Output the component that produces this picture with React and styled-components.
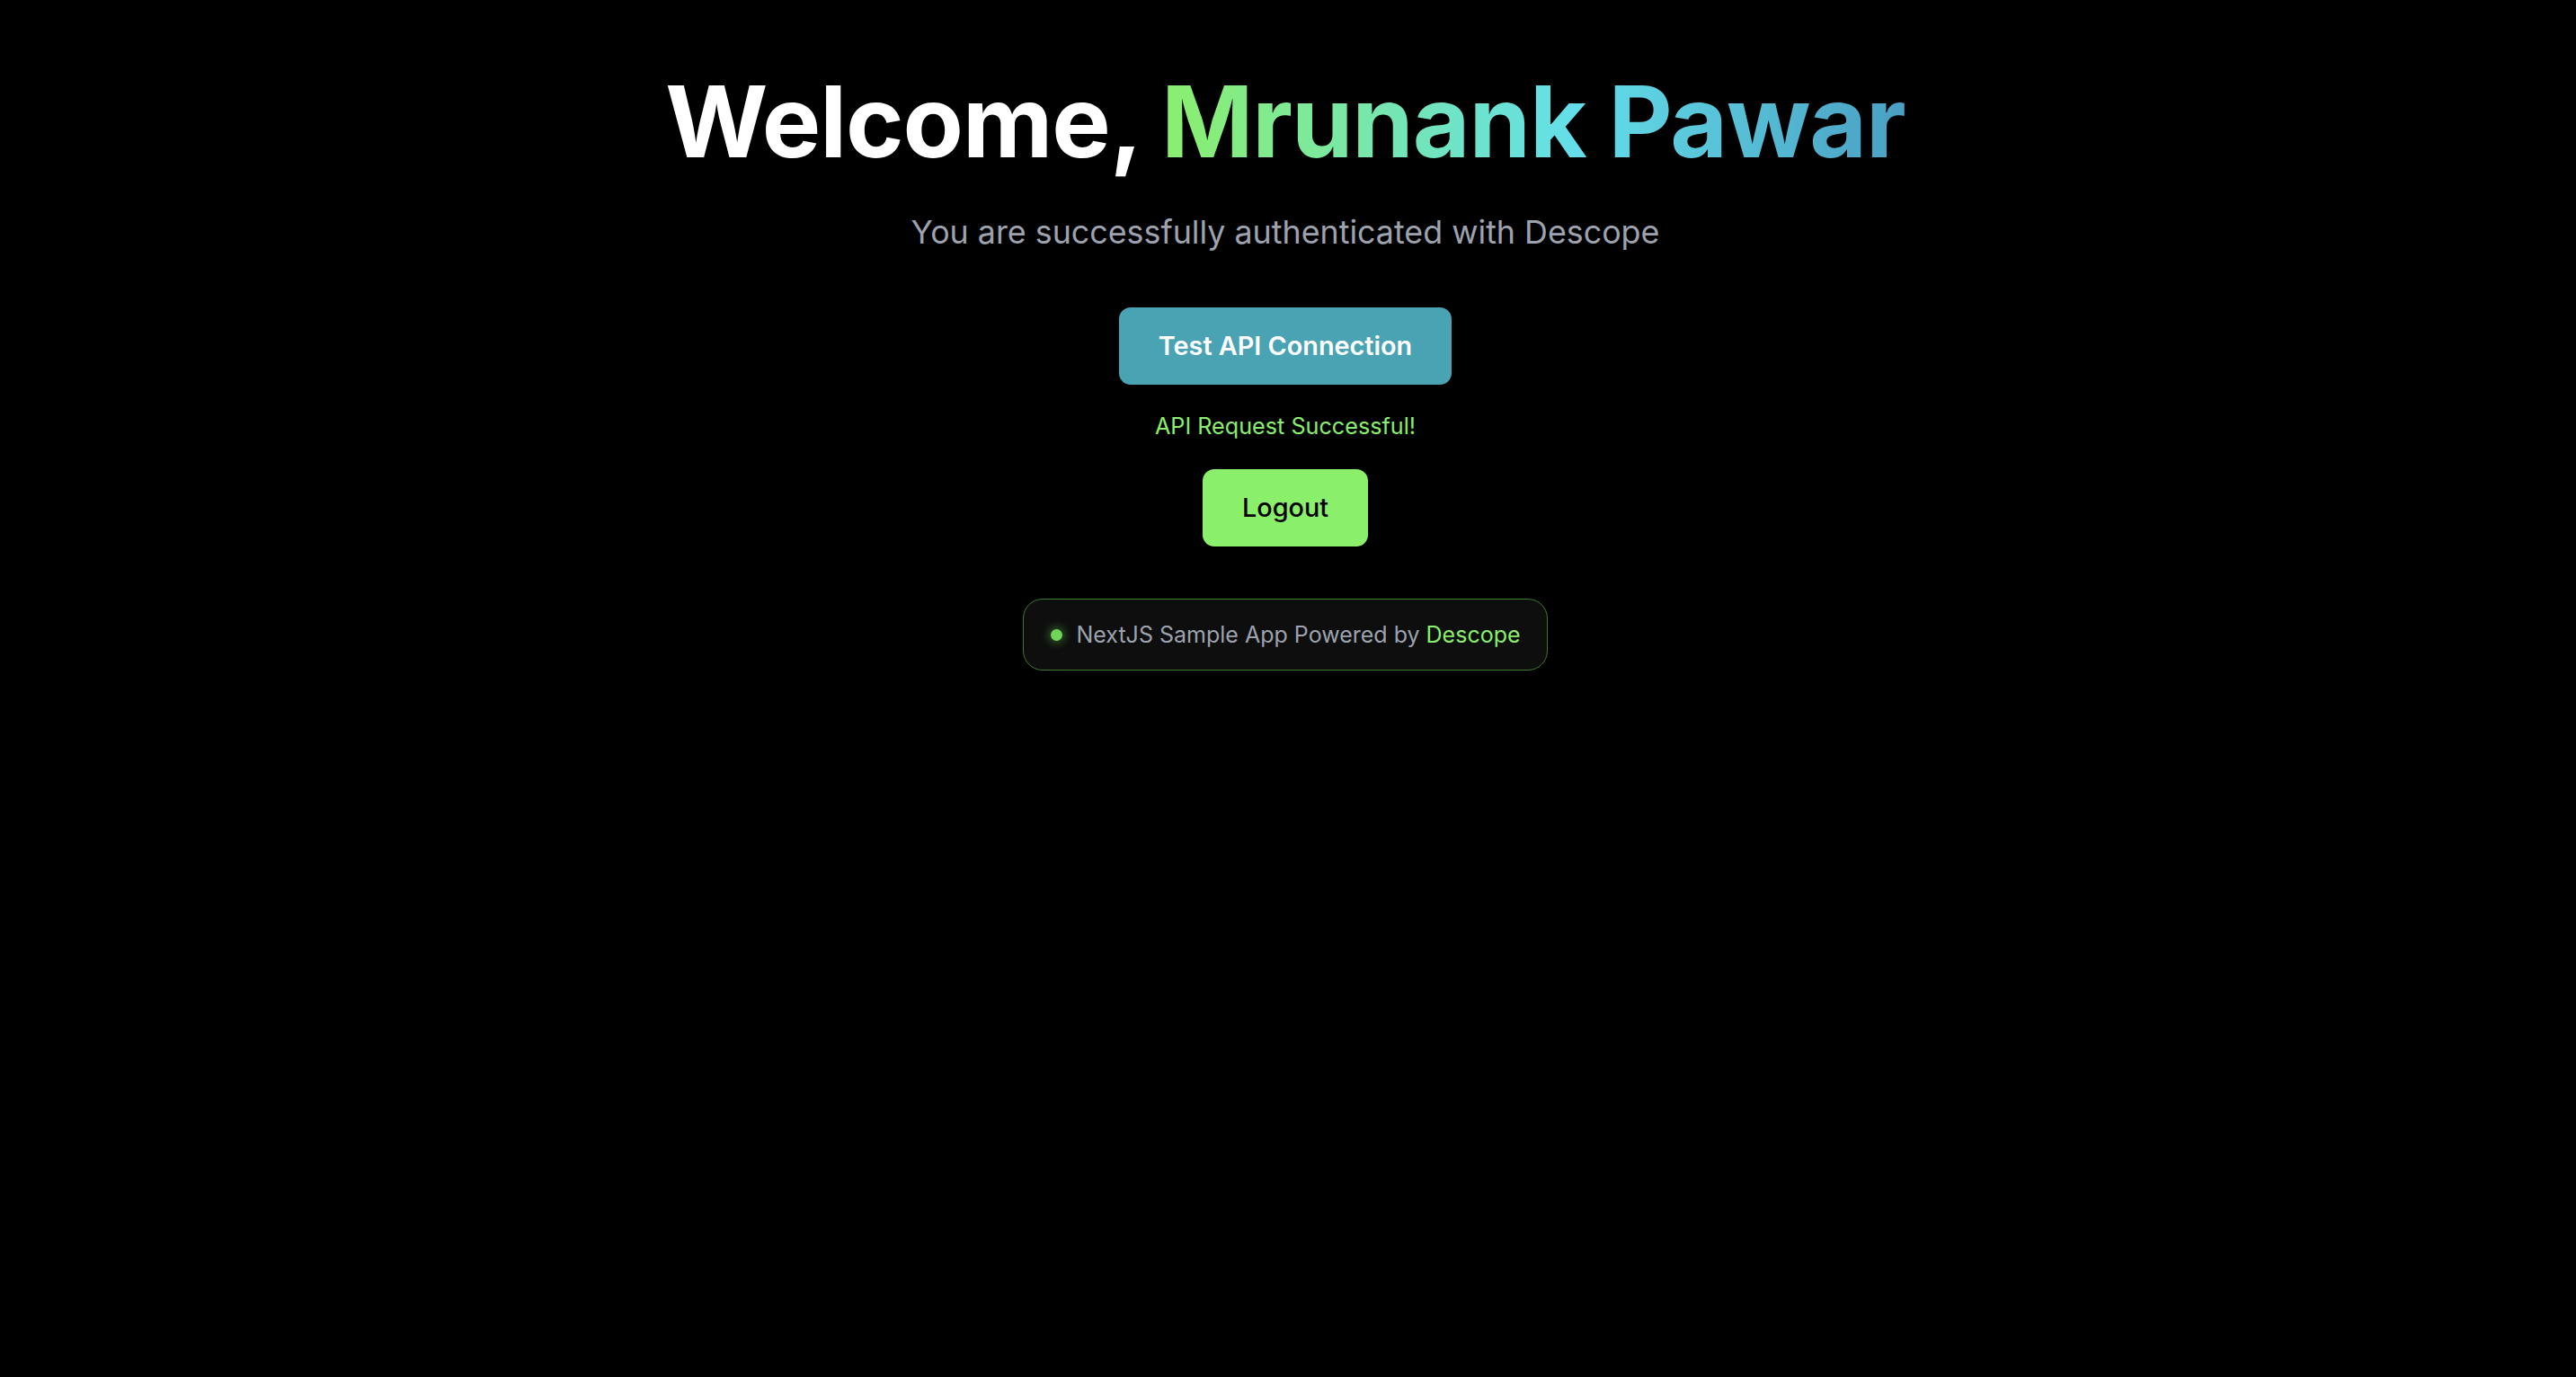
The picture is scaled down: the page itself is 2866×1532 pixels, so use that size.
import React from 'react';
import styled, { createGlobalStyle } from 'styled-components';

const GlobalStyle = createGlobalStyle`
  html, body {
    margin: 0;
    padding: 0;
    background: #000000;
  }
  body {
    font-family: Inter, "Noto Sans", "Liberation Sans", sans-serif;
    color: #ffffff;
  }
`;

const App = () => {
  return (
    <>
      <GlobalStyle />
      <Page>
        <Heading>
          Welcome, <Name>Mrunank Pawar</Name>
        </Heading>
        <Subtitle>You are successfully authenticated with Descope</Subtitle>
        <ApiButton>Test API Connection</ApiButton>
        <StatusText>API Request Successful!</StatusText>
        <LogoutButton>Logout</LogoutButton>
        <Badge>
          <Dot />
          <BadgeText>
            NextJS Sample App Powered by <BrandLink>Descope</BrandLink>
          </BadgeText>
        </Badge>
      </Page>
    </>
  );
};

export default App;

const Page = styled.main`
  display: flex;
  flex-direction: column;
  align-items: center;
  min-height: 1532px;
  box-sizing: border-box;
  padding: 80px 6px 0 0;
`;

const Heading = styled.h1`
  margin: 0;
  font-size: 110px;
  line-height: 1;
  font-weight: 700;
  letter-spacing: -0.01em;
  color: #ffffff;
  white-space: nowrap;
`;

const Name = styled.span`
  background: linear-gradient(90deg, #8bef6d 0%, #64dfe9 55%, #4a9fc3 100%);
  -webkit-background-clip: text;
  background-clip: text;
  color: transparent;
`;

const Subtitle = styled.p`
  margin: 43px 0 0;
  font-size: 35.8px;
  line-height: 1.4;
  color: #9ca3af;
`;

const BaseButton = styled.button`
  border: none;
  border-radius: 13px;
  padding: 22px 44px;
  font-family: inherit;
  font-size: 28.8px;
  line-height: 42px;
  cursor: pointer;
`;

const ApiButton = styled(BaseButton)`
  margin-top: 59px;
  background: #4aa3b3;
  color: #ffffff;
  font-weight: 600;
`;

const StatusText = styled.p`
  margin: 28px 0 0;
  font-size: 25.2px;
  line-height: 36px;
  color: #88ef6c;
`;

const LogoutButton = styled(BaseButton)`
  margin-top: 30px;
  background: #8af06c;
  color: #000000;
  font-weight: 500;
`;

const Badge = styled.div`
  display: flex;
  align-items: center;
  gap: 15px;
  margin-top: 58px;
  height: 80px;
  box-sizing: border-box;
  padding: 0 29px 0 30px;
  background: #0e0e0e;
  border: 1.5px solid #3b7a2b;
  border-radius: 22px;
`;

const Dot = styled.span`
  width: 13px;
  height: 13px;
  border-radius: 50%;
  background: #6fd65a;
  box-shadow: 0 0 10px 3px rgba(111, 214, 90, 0.35);
`;

const BadgeText = styled.span`
  font-size: 25px;
  line-height: 1.4;
  color: #9ca3af;
`;

const BrandLink = styled.span`
  color: #88ef6c;
`;
